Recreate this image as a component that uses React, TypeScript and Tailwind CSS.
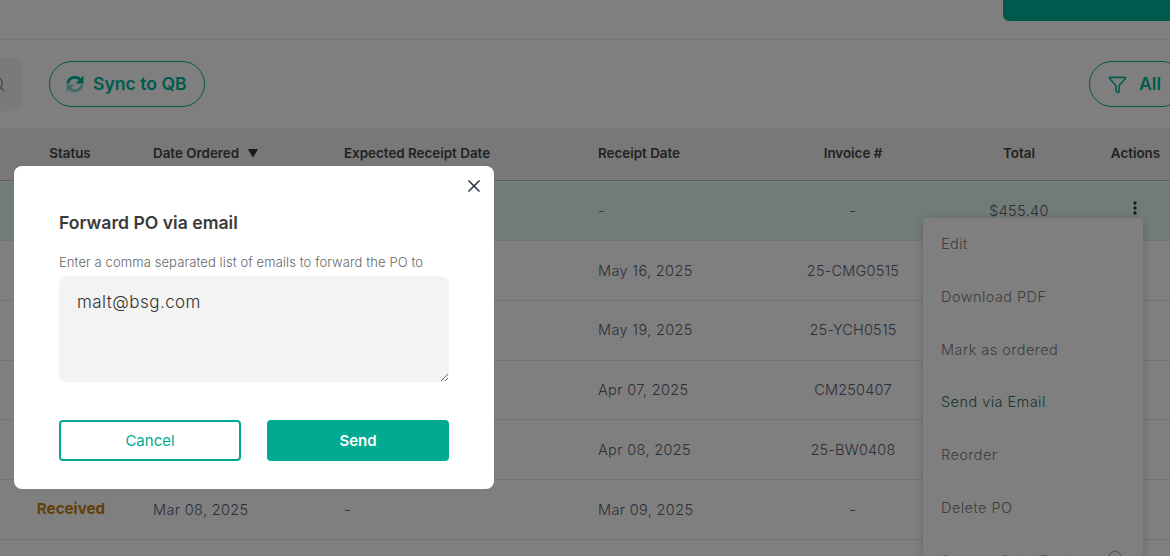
import React from 'react';
import { Search, Funnel, X, Info } from 'lucide-react';

const columns = 'grid grid-cols-[140px_204px_254px_170px_170px_162px_70px] items-center';

const rows = [
  { status: '', ordered: '', expected: '', receipt: '-', invoice: '-', total: '$455.40', active: true },
  { status: '', ordered: '', expected: '', receipt: 'May 16, 2025', invoice: '25-CMG0515', total: '', active: false },
  { status: '', ordered: '', expected: '', receipt: 'May 19, 2025', invoice: '25-YCH0515', total: '', active: false },
  { status: '', ordered: '', expected: '', receipt: 'Apr 07, 2025', invoice: 'CM250407', total: '', active: false },
  { status: '', ordered: '', expected: '', receipt: 'Apr 08, 2025', invoice: '25-BW0408', total: '', active: false },
  { status: 'Received', ordered: 'Mar 08, 2025', expected: '-', receipt: 'Mar 09, 2025', invoice: '-', total: '', active: false },
];

const menuItems = ['Edit', 'Download PDF', 'Mark as ordered', 'Send via Email', 'Reorder', 'Delete PO'];

const SyncIcon = () => (
  <svg width="18" height="18" viewBox="0 0 18 18" fill="none">
    <path d="M1.8 8.4 A7.2 7.2 0 0 1 14 4.4" stroke="#00b69c" strokeWidth="3" />
    <path d="M17.5 0.5 V8.5 H9.5 Z" fill="#00b69c" />
    <g opacity="0.5">
      <path d="M16.2 9.6 A7.2 7.2 0 0 1 4 13.6" stroke="#00b69c" strokeWidth="3" />
      <path d="M0.5 17.5 V9.5 H8.5 Z" fill="#00b69c" />
    </g>
  </svg>
);

const KebabIcon = () => (
  <svg width="4" height="14" viewBox="0 0 4 14" fill="#333">
    <circle cx="2" cy="2" r="1.7" />
    <circle cx="2" cy="7" r="1.7" />
    <circle cx="2" cy="12" r="1.7" />
  </svg>
);

export default function App() {
  return (
    <div className="relative w-[1170px] h-[556px] overflow-hidden bg-white font-['Inter','Liberation_Sans',sans-serif]">
      {/* Page behind the dialog */}
      <div className="flex justify-end h-[40px] border-b border-[#ececec]">
        <div className="w-[167px] h-[21px] bg-[#00b69c] rounded-bl-md" />
      </div>

      <div className="flex items-center h-[88px] -mr-[15px]">
        <div className="flex justify-end items-center w-[100px] h-[53px] -ml-[78px] pr-[16px] bg-[#f5f5f5] rounded-lg">
          <Search className="w-[18px] h-[18px] text-[#999]" />
        </div>
        <button className="flex items-center gap-[9px] ml-[27px] w-[156px] h-[46px] pl-[16px] border border-[#00b69c] rounded-full text-[17.6px] font-semibold text-[#00b69c]">
          <SyncIcon />
          Sync to QB
        </button>
        <button className="flex items-center gap-[12px] ml-auto w-[96px] h-[46px] pl-[18px] border border-[#00b69c] rounded-full text-[17.6px] font-semibold text-[#00b69c]">
          <Funnel className="w-[19px] h-[19px]" strokeWidth={2} />
          All
        </button>
      </div>

      <div className={`${columns} h-[53px] pb-[1px] bg-[#f0f0f0] border-b border-[#bfbfbf] text-[13.4px] font-semibold text-[#444]`}>
        <div className="text-center">Status</div>
        <div className="flex items-center gap-[8px] pl-[13px]">
          Date Ordered
          <span className="text-[11px] text-[#333]">▼</span>
        </div>
        <div>Expected Receipt Date</div>
        <div>Receipt Date</div>
        <div className="text-center">Invoice #</div>
        <div className="text-center">Total</div>
        <div className="text-center pl-[1px]">Actions</div>
      </div>

      <div className="pt-[0.5px]">
        {rows.map((row, i) => (
          <div
            key={i}
            className={`${columns} h-[59.7px] border-b border-[#e6e6e6] text-[14.5px] font-light tracking-[0.35px] text-[#5a606c] ${row.active ? 'bg-[#e2f6f0]' : ''} ${i === 5 ? 'pt-[1px]' : ''}`}
          >
            <div className="text-center pl-[2px] text-[15.2px] font-bold tracking-normal text-[#c88012]">{row.status}</div>
            <div className="pl-[13px]">{row.ordered}</div>
            <div>{row.expected}</div>
            <div>{row.receipt}</div>
            <div className="text-center tracking-[0.2px]">{row.invoice}</div>
            <div className="text-center">{row.total}</div>
            <div className="flex justify-center -mt-[5px]">{row.active && <KebabIcon />}</div>
          </div>
        ))}
      </div>

      {/* Row actions menu */}
      <div className="absolute left-[923px] top-[218px] w-[220px] h-[400px] bg-white rounded shadow-[0_2px_10px_rgba(0,0,0,0.2)] text-[14.5px] font-light tracking-[0.45px] text-[#7c7c7c]">
        {menuItems.map((item) => (
          <div
            key={item}
            className={`flex items-center h-[52.8px] pb-[1px] pl-[18px] ${item === 'Send via Email' ? 'text-[#2f6f60]' : ''}`}
          >
            {item}
          </div>
        ))}
        <div className="flex items-center justify-between h-[52.8px] pb-[1px] pl-[18px] pr-[21px] text-[#b5b5b5]">
          Sync to QuickBooks
          <Info className="w-[14px] h-[14px] -mt-[8px]" />
        </div>
      </div>

      <div className="absolute inset-0 bg-black/50" />

      {/* Forward dialog */}
      <div className="absolute left-[14px] top-[166px] w-[480px] h-[323px] px-[45px] pt-[46px] bg-white rounded-lg">
        <button className="absolute right-[10px] top-[10px] text-[#2d3748]">
          <X className="w-[20px] h-[20px]" strokeWidth={2} />
        </button>
        <h2 className="text-[17.6px] leading-[22px] font-semibold text-[#3a3a3a]">Forward PO via email</h2>
        <p className="mt-[20px] text-[13px] leading-[16px] font-light tracking-[0.1px] text-[#666]">
          Enter a comma separated list of emails to forward the PO to
        </p>
        <textarea
          defaultValue="malt@bsg.com"
          className="block w-[390px] h-[106px] mt-[6px] px-[18px] py-[14px] bg-[#f3f3f3] rounded-lg text-[17px] leading-[24px] font-light tracking-[0.45px] text-[#333] outline-none"
        />
        <div className="flex gap-[26px] mt-[38px]">
          <button className="w-[182px] h-[41px] pt-[1px] border-2 border-[#00ab91] rounded text-[15px] text-[#00ab91]">Cancel</button>
          <button className="w-[182px] h-[41px] pt-[1px] bg-[#00ab91] rounded text-[15px] font-semibold text-white">Send</button>
        </div>
      </div>
    </div>
  );
}
